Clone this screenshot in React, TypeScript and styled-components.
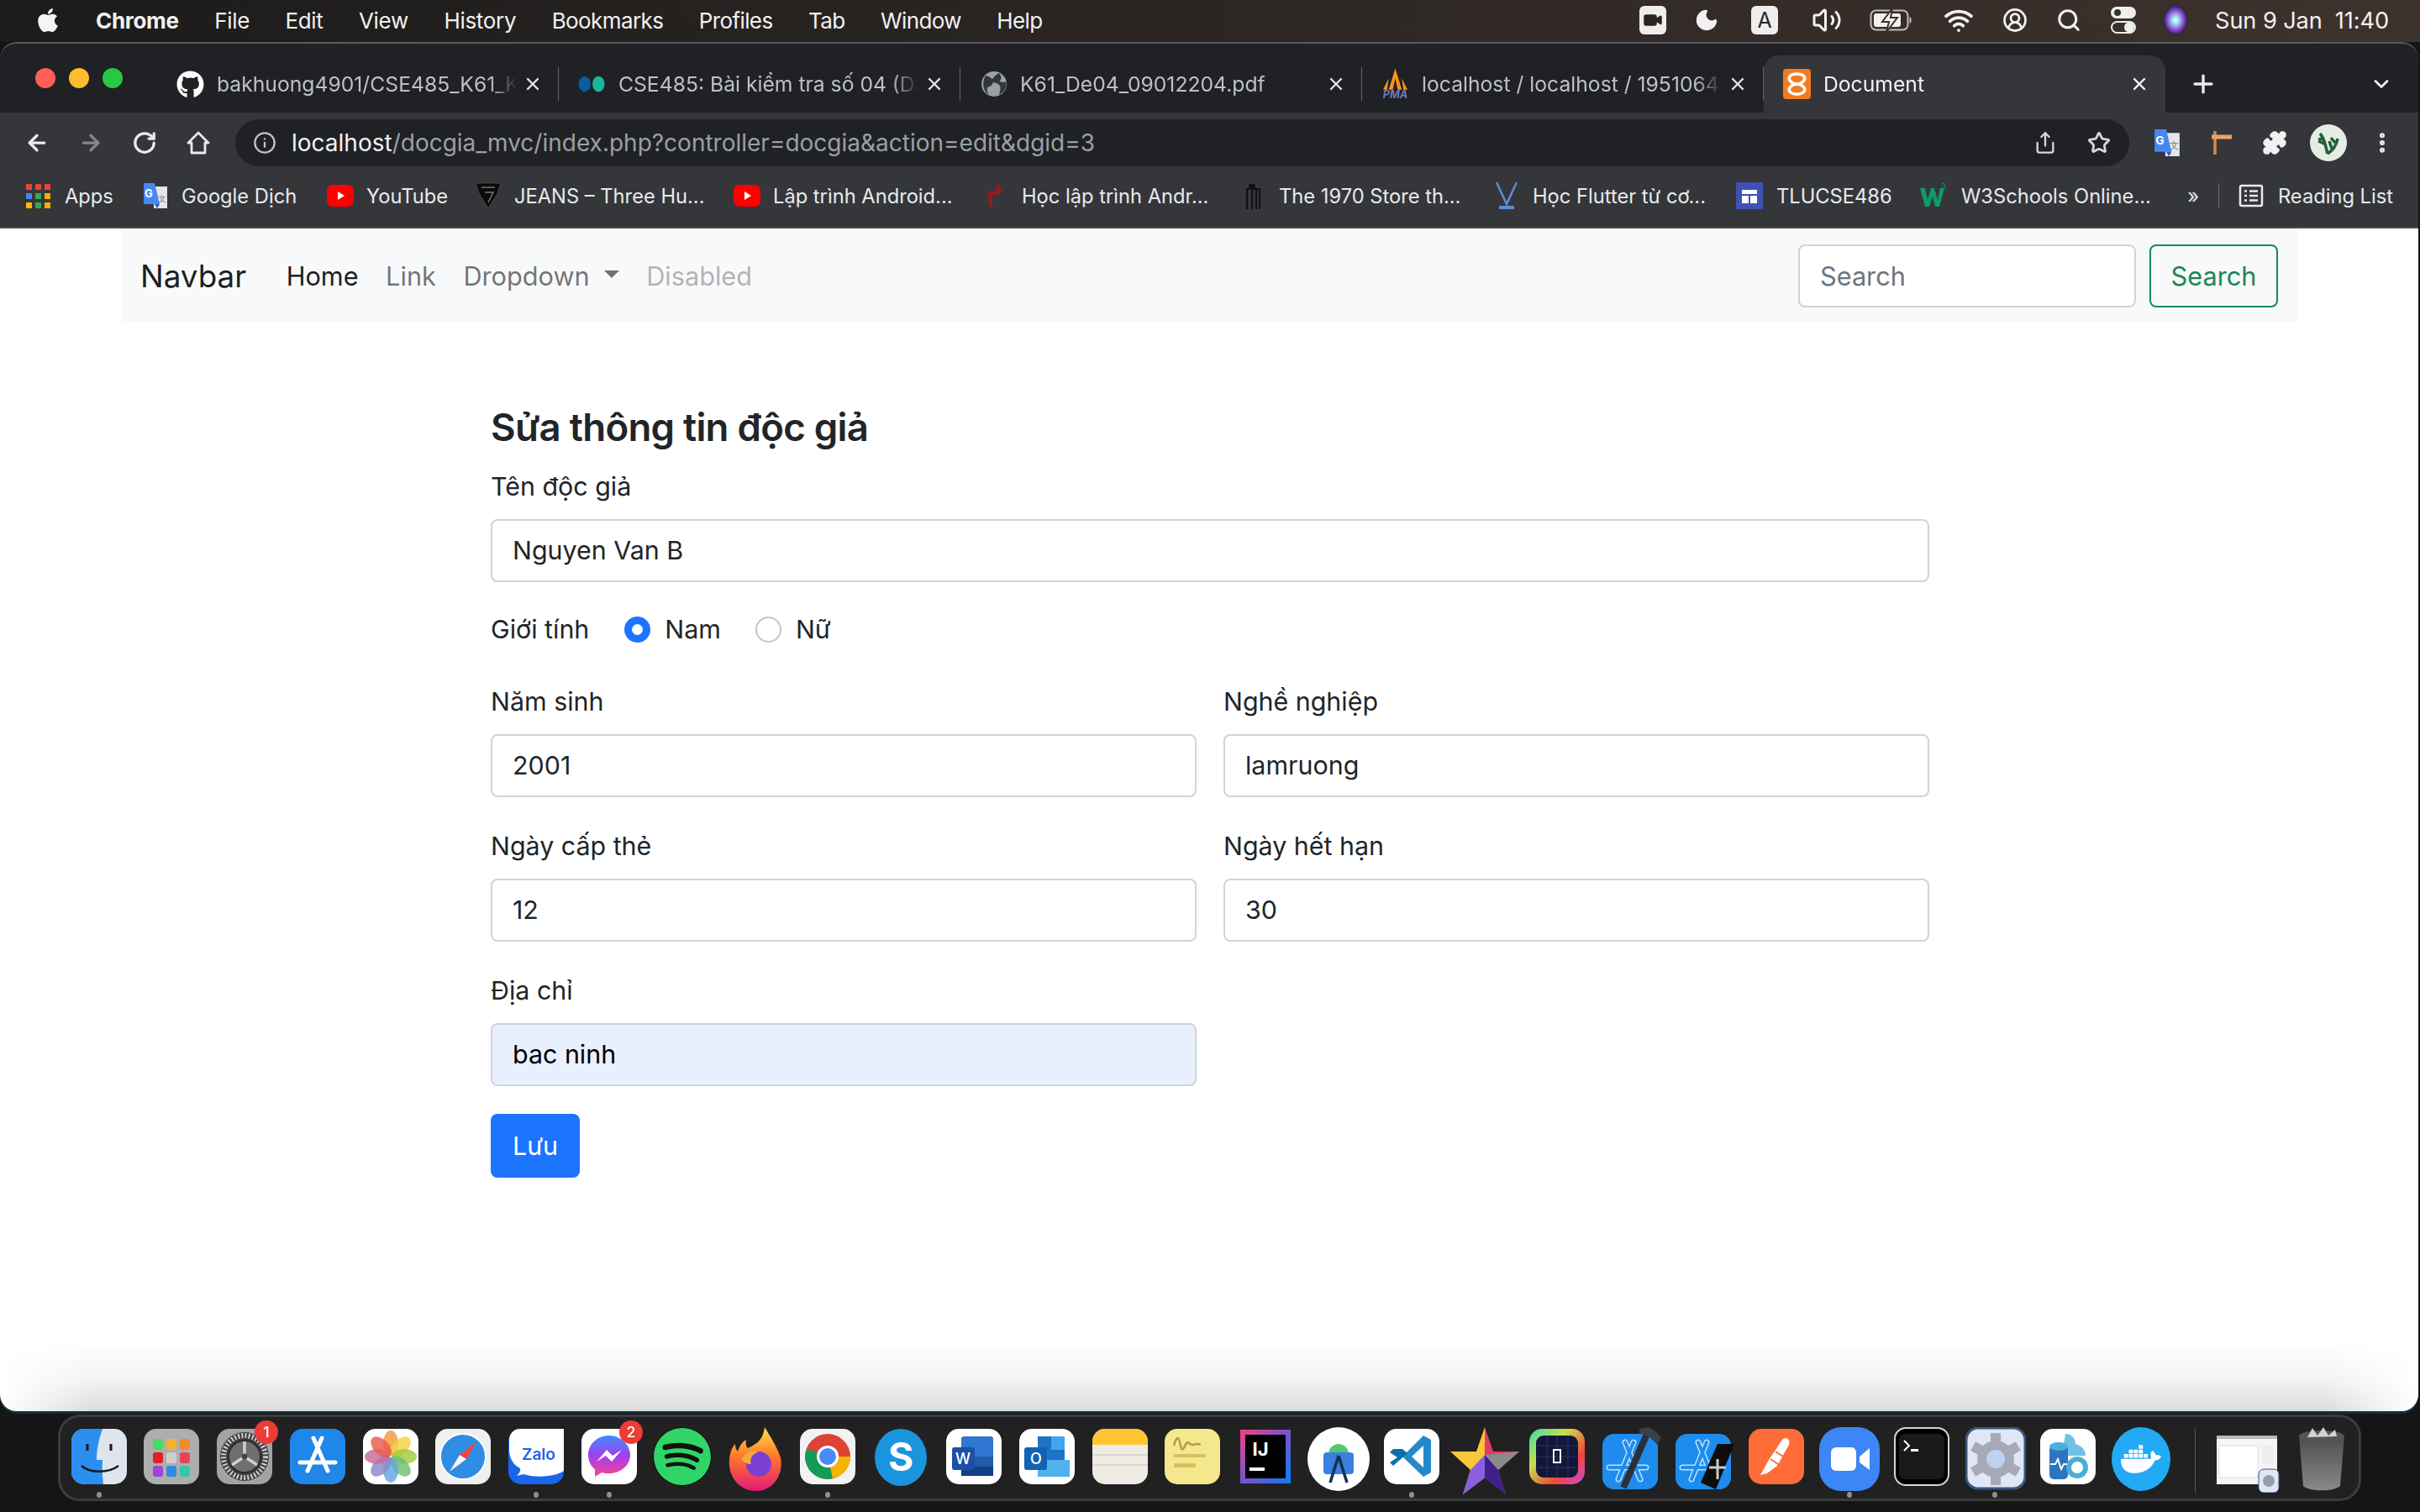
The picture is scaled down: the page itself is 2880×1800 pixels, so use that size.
import React from 'react';
import styled, { createGlobalStyle } from 'styled-components';
import { ArrowLeft, ArrowRight, RotateCw, Info, Share, Star, Puzzle, MoreVertical, Plus, ChevronDown, X, Moon, Search, Wifi, Video, CircleUserRound, Volume2 } from 'lucide-react';
import { FaApple, FaGithub, FaSpotify, FaDocker } from 'react-icons/fa';

const Global = createGlobalStyle`
  html, body { margin: 0; padding: 0; background: #141414; }
  * { box-sizing: border-box; }
`;

const Desktop = styled.div`
  width: 2880px; height: 1800px; overflow: hidden; display: flex; flex-direction: column;
  background: #151515; font-family: Inter, "Noto Sans", sans-serif;
`;

/* ---------- macOS menu bar ---------- */
const MenuBar = styled.div`
  height: 50px; flex: none; display: flex; align-items: center; padding: 0 37px 2px 41px; color: #f1f1f1;
  background: linear-gradient(90deg, #1b1b1b 0%, #2a2522 45%, #3e322d 100%);
  font-size: 26px;
`;
const MenuItems = styled.div`display: flex; align-items: center; gap: 42.4px; margin-left: 41px;`;
const MenuItem = styled.span<{ $bold?: boolean; $tight?: boolean }>`
  font-weight: ${p => (p.$bold ? 700 : 400)}; letter-spacing: ${p => (p.$tight ? -0.6 : -0.3)}px;
`;
const StatusIcons = styled.div`margin-left: auto; display: flex; align-items: center;`;
const StatusSlot = styled.span<{ $w: number }>`width: ${p => p.$w}px; flex: none; display: flex; align-items: center; justify-content: center;`;
const KeyBadge = styled.span`
  width: 32px; height: 34px; border-radius: 6px; background: #eee; color: #2b2522; font-size: 25px;
  display: flex; align-items: center; justify-content: center;
`;
const Clock = styled.span`margin-left: 13px; font-size: 27.2px; white-space: pre; letter-spacing: -0.1px;`;

/* ---------- browser window ---------- */
const Win = styled.div`
  flex: none; height: 1630px; border-radius: 20px; overflow: hidden; display: flex; flex-direction: column;
  background: #202124; border-top: 2px solid #5a5a5c; margin-right: 2px; box-shadow: 0 3px 0 #12303f;
`;
const TabStrip = styled.div`
  height: 82px; flex: none; display: flex; align-items: flex-end; padding-left: 42px; position: relative; color: #bdc1c6;
`;
const Lights = styled.div`display: flex; gap: 16px; width: 145px; align-self: flex-start; margin-top: 29px; flex: none;`;
const Light = styled.span<{ $c: string }>`width: 24px; height: 24px; border-radius: 50%; background: ${p => p.$c};`;
const Tab = styled.div<{ $active?: boolean; $last?: boolean }>`
  width: 478px; height: 68px; flex: none; display: flex; align-items: center; position: relative;
  padding: 0 19px 0 23px; gap: 15px; font-size: 24.7px;
  background: ${p => (p.$active ? '#35363a' : 'transparent')};
  color: ${p => (p.$active ? '#f1f3f4' : '#bdc1c6')};
  border-radius: ${p => (p.$active ? '18px 18px 0 0' : '0')};
  &::after {
    content: ''; position: absolute; right: 0; top: 14px; height: 40px; width: 1px;
    background: ${p => (p.$last ? 'transparent' : '#5f6368')};
  }
`;
const TabIcon = styled.span`width: 33px; height: 38px; flex: none; display: flex; align-items: center; justify-content: center;`;
const TabTitle = styled.span`
  flex: 1; min-width: 0; white-space: nowrap;
  -webkit-mask-image: linear-gradient(90deg, #000 90%, transparent 99%);
  mask-image: linear-gradient(90deg, #000 90%, transparent 99%);
`;
const TabClose = styled.span`margin-left: -12px; width: 24px; flex: none; display: flex;`;
const NewTab = styled.div`margin-left: 28px; display: flex; align-self: center; margin-top: 14px; color: #e8eaed;`;
const TabMenu = styled.div`margin-left: auto; margin-right: 30px; display: flex; align-self: center; margin-top: 14px; color: #e8eaed;`;

const Toolbar = styled.div`
  height: 64px; flex: none; background: #35363a; display: flex; align-items: center; padding: 8px 0 0 29px; color: #e8eaed;
`;
const NavIcons = styled.div`display: flex; align-items: center; gap: 34px; width: 251px; flex: none;`;
const Omni = styled.div`
  flex: none; width: 2254px; height: 56px; background: #202124; border-radius: 28px; display: flex; align-items: center; padding: 0 22px 0 21px; gap: 18px;
  color: #9aa0a6; font-size: 28px;
`;
const Url = styled.span`white-space: nowrap;`;
const Host = styled.span`color: #f1f3f4;`;
const OmniActions = styled.div`margin-left: auto; display: flex; align-items: center; gap: 36px; color: #d5d7da;`;
const Extensions = styled.div`flex: 1; display: flex; align-items: center; padding-left: 13px;`;
const ExtSlot = styled.span`width: 64px; flex: none; display: flex; align-items: center; justify-content: center;`;
const Avatar = styled.span`
  width: 44px; height: 44px; border-radius: 50%; background: #e6ece4; display: flex; align-items: center; justify-content: center;
`;

const Bookmarks = styled.div`
  height: 74px; flex: none; background: #35363a; display: flex; align-items: center; padding: 0 0 2px 30px;
  font-size: 23.7px; color: #e8eaed; border-bottom: 2px solid #4a4b4f;
`;
const Bookmark = styled.div<{ $w: number }>`width: ${p => p.$w}px; flex: none; display: flex; align-items: center; white-space: nowrap;`;
const BookmarkGlyph = styled.span<{ $w: number }>`width: ${p => p.$w}px; flex: none; display: flex; align-items: center;`;
const BookmarkEnd = styled.div`margin-left: auto; display: flex; align-items: center; gap: 17px; padding-right: 30px; white-space: nowrap;`;
const Divider = styled.span`width: 1px; height: 30px; background: #6a6b6f; margin: 0 6px 0 6px;`;

/* ---------- page ---------- */
const Page = styled.div`
  flex: 1; background: #fff; position: relative; color: #212529; font-size: 30.4px; line-height: 47px;
  &::after {
    content: ''; position: absolute; left: 0; right: 0; bottom: 0; height: 80px; pointer-events: none;
    background: linear-gradient(to top, rgba(0,0,0,.14), rgba(0,0,0,.05) 45%, rgba(0,0,0,0));
    -webkit-mask-image: linear-gradient(90deg, transparent, #000 110px, #000 calc(100% - 110px), transparent);
    mask-image: linear-gradient(90deg, transparent, #000 110px, #000 calc(100% - 110px), transparent);
  }
`;
const Navbar = styled.nav`
  height: 112px; margin: 0 144px; background: #f8f9fa; display: flex; align-items: center; padding: 0 23px 0 23px; font-size: 30.7px;
`;
const Brand = styled.span`font-size: 36.8px; color: rgba(0,0,0,.9); margin-right: 47.5px;`;
const NavLinks = styled.div`display: flex; align-items: center; gap: 32.5px;`;
const NavLink = styled.span<{ $tone: number }>`color: rgba(0,0,0,${p => p.$tone}); display: flex; align-items: center; gap: 17px;`;
const Caret = styled.i`width: 0; height: 0; border-left: 9px solid transparent; border-right: 9px solid transparent; border-top: 9px solid currentColor; margin-top: -3px;`;
const SearchForm = styled.div`margin-left: auto; display: flex; gap: 16px;`;
const SearchField = styled.div`
  width: 402px; height: 75px; border: 2px solid #ced4da; border-radius: 8px; padding: 0 24px; display: flex; align-items: center; color: #6c757d; background: #fff;
`;
const SearchButton = styled.div`
  width: 153px; height: 75px; border: 2px solid #198754; border-radius: 8px; color: #198754; display: flex; align-items: center; justify-content: center;
`;
const Content = styled.div`width: 1712px; margin-left: 584px; padding-top: 97px;`;
const Heading = styled.h4`margin: 0 0 19px; font-size: 45.6px; font-weight: 600; line-height: 56px; letter-spacing: -0.75px;`;
const Label = styled.label`display: block; margin-bottom: 15px;`;
const Field = styled.div<{ $autofill?: boolean }>`
  height: 75px; border: 2px solid #ced4da; border-radius: 8px; padding: 0 24px 0 24px; display: flex; align-items: center;
  background: ${p => (p.$autofill ? '#e8f0fe' : '#fff')}; color: ${p => (p.$autofill ? '#000' : '#212529')};
`;
const RadioRow = styled.div`display: flex; align-items: center; margin-top: 33px; height: 47px;`;
const RadioLabel = styled.span`margin-right: 42px;`;
const RadioOption = styled.span`display: flex; align-items: center; gap: 17px; margin-right: 41px;`;
const Radio = styled.i<{ $on?: boolean }>`
  width: 31px; height: 31px; border-radius: 50%; background: #fff;
  border: ${p => (p.$on ? '9px solid #1c74ff' : '2px solid #c6c6c6')};
`;
const Grid = styled.div`display: grid; grid-template-columns: 840px 840px; column-gap: 32px; row-gap: 35px; margin-top: 39px;`;
const Group = styled.div``;
const SaveButton = styled.div`
  margin-top: 33px; width: 106px; height: 76px; border-radius: 8px; background: #1c74ff; color: #fff; display: flex; align-items: center; justify-content: center;
`;

/* ---------- dock ---------- */
const DockRow = styled.div`flex: none; display: flex; justify-content: flex-start; padding: 4px 0 0 69px;`;
const Dock = styled.div`
  width: 2741px; height: 103px; border: 3px solid #3c3c3c; border-radius: 26px; background: #212121; display: flex; align-items: flex-start;
  padding: 12px 0 0 12.5px; gap: 20.8px;
`;
const DockItem = styled.div`width: 66px; height: 84px; flex: none; position: relative;`;
const DockDot = styled.i`position: absolute; left: 30px; bottom: 0; width: 6px; height: 7px; border-radius: 50%; background: #8e8e8e;`;
const DockBadge = styled.b`
  position: absolute; right: -7px; top: -8px; width: 28px; height: 28px; border-radius: 50%; background: #ee3b36; color: #fff;
  font-size: 17px; font-weight: 500; display: flex; align-items: center; justify-content: center;
`;
const DockSeparator = styled.span`width: 1px; height: 76px; background: #5a5a5a; flex: none; margin: 2px 10px 0 10px;`;

const Rounded = ({ fill, children }: { fill: string; children?: React.ReactNode }) => (
  <svg width="66" height="70" viewBox="0 0 66 70" fill="none">
    <rect x="0" y="2" width="66" height="66" rx="15" fill={fill} />
    {children}
  </svg>
);
const T = ({ x, y, s, c, w = 700, children }: { x: number; y: number; s: number; c: string; w?: number; children: string }) => (
  <text x={x} y={y} fontSize={s} fontWeight={w} fill={c} textAnchor="middle" fontFamily="Inter, sans-serif">{children}</text>
);
const OutlineA = ({ dx = 0 }: { dx?: number }) => (
  <g transform={`translate(${dx} 0)`} strokeLinecap="round">
    <path d="M37 18 19 62M27 18l18 44M8 48h44" stroke="#bfe1fb" strokeWidth="7" />
    <path d="M37 18 19 62M27 18l18 44M8 48h44" stroke="#1e8cec" strokeWidth="4" />
  </g>
);

const dockIcons: Record<string, React.ReactNode> = {
  finder: <Rounded fill="#dfe5ee"><path d="M15 2h22c-5 14-7 26-7 37h7c-1 10 0 20 1 29H15A15 15 0 0 1 0 53V17A15 15 0 0 1 15 2Z" fill="#2a8ff0" /><path d="M12 46c10 9 32 9 44 0" stroke="#1b1b1b" strokeWidth="2.5" fill="none" /><path d="M19 20v8M47 20v8" stroke="#1b1b1b" strokeWidth="3" /></Rounded>,
  launchpad: <Rounded fill="#aeaeae">{['#4cd964','#f6b22c','#f38b2a','#e02020','#cfcfcf','#f0405a','#9a48d0','#2d8ae8','#32c8a8'].map((c, i) => <rect key={i} x={11 + (i % 3) * 16} y={14 + Math.floor(i / 3) * 16} width="12" height="13" rx="3" fill={c} />)}</Rounded>,
  prefs: <Rounded fill="#a3a3a3"><circle cx="33" cy="35" r="29" fill="#3f3f3f" /><circle cx="33" cy="35" r="25" fill="none" stroke="#cfcfcf" strokeWidth="6" strokeDasharray="2 2.2" /><circle cx="33" cy="35" r="19" fill="#6f6f6f" stroke="#2c2c2c" strokeWidth="2" /><path d="M33 35V17M33 35 18 45M33 35l15 10" stroke="#d0d0d0" strokeWidth="3.5" /><circle cx="33" cy="35" r="3.5" fill="#444" /></Rounded>,
  appstore: <Rounded fill="#1f87ea"><path d="M38 13 21 52M28 13l17 39M12 42h42" stroke="#fff" strokeWidth="5" strokeLinecap="round" /></Rounded>,
  photos: <Rounded fill="#fff">{['#f29a3b','#f4d23e','#a5c93e','#6fbf73','#62a8dc','#8f86c8','#c46a9a','#ec5a4c'].map((c, i) => <ellipse key={i} cx="33" cy="19" rx="9" ry="15" fill={c} opacity=".82" transform={`rotate(${i * 45} 33 35)`} />)}</Rounded>,
  safari: <Rounded fill="#efefef"><circle cx="33" cy="35" r="27" fill="#2f8de4" stroke="#fff" strokeWidth="2" /><path d="m49 17-12 21-8-5Z" fill="#f0453a" /><path d="m17 53 12-20 8 5Z" fill="#f5f5f5" /></Rounded>,
  zalo: <Rounded fill="#1a66e8"><path d="M14 2h52v50c-12 8-36 8-48 4l-8 2c3-3 5-6 4-9-8-4-13-12-13-22V16C1 8 6 2 14 2Z" fill="#fff" /><T x={36} y={39} s={19} c="#1a66e8" w={600}>Zalo</T></Rounded>,
  messenger: <Rounded fill="#fff"><path d="M33 10C19 10 8 20 8 33c0 7 3 13 8 17v9l8-5c3 1 6 1 9 1 14 0 25-10 25-22S47 10 33 10Z" fill="url(#msgr)" /><path d="m18 41 12-14 7 7 11-7-12 14-7-7Z" fill="#fff" /><defs><linearGradient id="msgr" x1="0" y1="0" x2="0" y2="1"><stop stopColor="#3c8cff" /><stop offset=".5" stopColor="#a63dee" /><stop offset="1" stopColor="#f6458e" /></linearGradient></defs></Rounded>,
  firefox: <svg width="70" height="76" viewBox="0 0 70 76"><path d="M44 0c6 10 14 22 19 36 4 22-10 40-29 40C15 76 0 60 2 38c1-8 3-14 7-18 0 4 1 7 3 9 2-7 6-12 10-14-1 5 0 8 2 10 8-4 18-8 20-25Z" fill="url(#ff)" /><circle cx="37" cy="44" r="15" fill="#7d3fd1" /><path d="M16 38c6-8 15-12 20-8-8 2-10 10-8 14-5 0-9-2-12-6Z" fill="#f9a83a" /><defs><linearGradient id="ff" x1="0" y1="0" x2="0" y2="1"><stop stopColor="#ffe24a" /><stop offset=".45" stopColor="#ff7a2a" /><stop offset="1" stopColor="#e5197a" /></linearGradient></defs></svg>,
  chrome: <Rounded fill="#f2f2f2"><circle cx="33" cy="35" r="27" fill="#db4437" /><path d="M33 35 10 49a27 27 0 0 0 29 12Z" fill="#0f9d58" /><path d="M33 35h27a27 27 0 0 1-21 26Z" fill="#f4b400" /><path d="M33 35 10 49A27 27 0 0 1 8 26Z" fill="#0f9d58" /><circle cx="33" cy="35" r="13" fill="#fff" /><circle cx="33" cy="35" r="10" fill="#4a8af4" /></Rounded>,
  skype: <svg width="66" height="72" viewBox="0 0 66 72"><ellipse cx="33" cy="36" rx="31" ry="34" fill="#1a94dc" /><T x={33} y={52} s={46} c="#fff">S</T></svg>,
  word: <Rounded fill="#fff"><rect x="18" y="11" width="38" height="47" rx="3" fill="#2f77d0" /><rect x="18" y="35" width="38" height="12" fill="#1f5cab" /><rect x="18" y="47" width="38" height="11" fill="#123f86" /><rect x="7" y="24" width="27" height="27" rx="3" fill="#1d4fa8" /><T x={20} y={44} s={18} c="#fff" w={500}>W</T></Rounded>,
  outlook: <Rounded fill="#fff"><rect x="22" y="11" width="32" height="30" fill="#1f73c8" /><rect x="38" y="11" width="16" height="16" fill="#42a5ee" /><path d="M22 39h38v20H22Z" fill="#50b3ee" /><rect x="6" y="24" width="27" height="27" rx="3" fill="#0f62b4" /><T x={20} y={44} s={18} c="#fff" w={500}>O</T></Rounded>,
  notes: <Rounded fill="#efece4"><path d="M0 21V17A15 15 0 0 1 15 2h36a15 15 0 0 1 15 15v4Z" fill="#fdc632" /><path d="M0 33h66M0 45h66" stroke="#d9d6cd" strokeWidth="2" /></Rounded>,
  stickies: <Rounded fill="#f5e78d"><path d="M11 22c4-14 6-10 8 0s5 0 7-3 5 3 8 2 5-2 9 0" stroke="#b59a4a" strokeWidth="2.5" fill="none" /><rect x="11" y="32" width="38" height="4" fill="#d8c062" /><rect x="11" y="43" width="26" height="5" fill="#d8c062" /></Rounded>,
  idea: <svg width="66" height="70" viewBox="0 0 66 70"><rect x="3" y="3" width="60" height="64" fill="url(#ij)" /><rect x="9" y="9" width="48" height="52" fill="#000" /><T x={27} y={34} s={22} c="#fff">IJ</T><rect x="14" y="48" width="18" height="4" fill="#fff" /><defs><linearGradient id="ij" x1="0" y1="0" x2="1" y2="1"><stop stopColor="#f0447d" /><stop offset=".5" stopColor="#7a53c9" /><stop offset="1" stopColor="#087cfa" /></linearGradient></defs></svg>,
  studio: <svg width="74" height="76" viewBox="0 0 74 76" style={{ marginLeft: -4 }}><ellipse cx="37" cy="38" rx="37" ry="38" fill="#fff" /><path d="M25 32a12 12 0 0 1 24 0Z" fill="#54c774" /><rect x="19" y="30" width="36" height="26" rx="4" fill="#3d7fe0" /><path d="M37 34 27 66M37 34l10 32" stroke="#12324e" strokeWidth="3.5" /></svg>,
  vscode: <Rounded fill="#fff"><path d="M47 10 22 35l25 24 9-5V15Z" fill="#2489ca" /><path d="m47 22-14 13 14 13Z" fill="#fff" /><path d="M11 26l-4 4 9 6-9 6 4 4 17-15-6-5Z" fill="#0d6fb0" /></Rounded>,
  star: <svg width="82" height="80" viewBox="0 0 82 80" style={{ marginLeft: -8 }}><path d="M41 0 31 29H0l24 22-9 29 26-20Z" fill="#f9c63d" /><path d="M41 0l10 29h31L57 51l9 29-25-20Z" fill="#e23a67" /><path d="M41 33 82 29 57 51Z" fill="#8a8a8a" /><path d="M41 33 57 51l9 29-25-20Z" fill="#3f1f8a" /><path d="M41 33v27L15 80l9-29Z" fill="#8a5fe0" /></svg>,
  instr: <Rounded fill="url(#inst)"><rect x="8" y="10" width="50" height="50" rx="9" fill="#12173a" /><path d="M8 22h50M8 35h50M8 48h50M21 10v50M33 10v50M46 10v50" stroke="#2b3361" strokeWidth="1" /><rect x="29" y="27" width="8" height="15" fill="none" stroke="#fff" strokeWidth="2" /><defs><linearGradient id="inst" x1="0" y1="0" x2="1" y2="1"><stop stopColor="#3bd8b0" /><stop offset=".35" stopColor="#c9e04a" /><stop offset=".7" stopColor="#f0453a" /><stop offset="1" stopColor="#c64ae0" /></linearGradient></defs></Rounded>,
  xcode: <svg width="84" height="76" viewBox="0 0 84 76"><rect x="0" y="8" width="66" height="66" rx="14" fill="#1e8cec" /><OutlineA /><path d="M54 6 25 72" stroke="#2d2f36" strokeWidth="8" /><path d="M44 3c8-6 18-2 26 10l-5 8c-6-8-12-12-21-14Z" fill="#3c3f48" /></svg>,
  simulator: <svg width="84" height="76" viewBox="0 0 84 76"><rect x="0" y="8" width="66" height="66" rx="14" fill="#1e8cec" /><OutlineA /><path d="M50 20h20L48 74l-18-8Z" fill="#0d0d0d" /><path d="M40 48h20M50 38v24" stroke="#ccc" strokeWidth="3" /></svg>,
  postman: <Rounded fill="#ff6c37"><path d="m14 57 10-18 16-24c5-5 10 0 8 6L34 46l-12 9Z" fill="#fff" /><path d="M26 38l12 8M32 29l12 8" stroke="#ff6c37" strokeWidth="2" /></Rounded>,
  zoom: <svg width="72" height="76" viewBox="0 0 72 76" style={{ marginLeft: -3 }}><rect x="0" y="0" width="72" height="76" rx="26" fill="#3c86f5" /><rect x="14" y="24" width="30" height="28" rx="6" fill="#fff" /><path d="M48 35 60 25v26L48 42Z" fill="#fff" /></svg>,
  terminal: <svg width="66" height="70" viewBox="0 0 66 70"><rect x="1" y="1" width="64" height="68" rx="13" fill="#000" stroke="#ccd9dd" strokeWidth="2" /><rect x="6" y="8" width="54" height="54" rx="7" fill="#1a1a1a" /><path d="m12 16 6 6-6 6" stroke="#fff" strokeWidth="2" fill="none" /><rect x="20" y="26" width="9" height="3" fill="#fff" /></svg>,
  gear: <svg width="72" height="76" viewBox="0 0 72 76" style={{ marginLeft: -2 }}><rect x="1" y="1" width="70" height="72" rx="14" fill="#dfe6f5" stroke="#39587f" strokeWidth="3" /><circle cx="36" cy="38" r="22" fill="#a7a9b6" /><circle cx="36" cy="38" r="11" fill="#bcd2f0" />{[0,60,120,180,240,300].map(a => <rect key={a} x="30" y="7" width="12" height="12" fill="#a7a9b6" transform={`rotate(${a} 36 38)`} />)}</svg>,
  azure: <Rounded fill="#fff"><path d="M30 8c8 0 12 6 12 12 8 2 12 8 12 14H26Z" fill="#6fc1e8" /><rect x="11" y="22" width="22" height="40" rx="5" fill="#2f74c0" /><ellipse cx="22" cy="23" rx="11" ry="5" fill="#48b0de" /><circle cx="44" cy="48" r="10" fill="none" stroke="#4aaed8" strokeWidth="6" /><path d="m12 44 6 0 3-6 4 12 3-6h4" stroke="#fff" strokeWidth="2" fill="none" /></Rounded>,
  preview: <svg width="84" height="78" viewBox="0 0 84 78" style={{ marginLeft: -9 }}><rect x="4" y="10" width="72" height="58" fill="#f5f5f5" /><rect x="4" y="10" width="72" height="4" fill="#b9b9b9" /><rect x="7" y="22" width="46" height="38" fill="#fff" stroke="#ddd" /><rect x="58" y="22" width="14" height="22" fill="#ededed" /><rect x="54" y="50" width="24" height="28" rx="6" fill="#dfe6f5" stroke="#39587f" /><circle cx="66" cy="64" r="7" fill="#9a9caa" /></svg>,
  trash: <svg width="66" height="76" viewBox="0 0 66 76"><path d="M6 10h54l-5 60c-7 7-37 7-44 0Z" fill="url(#tr)" /><ellipse cx="33" cy="11" rx="27" ry="7" fill="#555" /><path d="m16 12 6-11 6 9 7-10 6 10 8-7 2 8" fill="#d2d2d2" /><defs><linearGradient id="tr" x1="0" y1="0" x2="0" y2="1"><stop stopColor="#4c4c4c" /><stop offset="1" stopColor="#8a8a8a" /></linearGradient></defs></svg>,
};

const dock: { key: string; dot?: boolean; badge?: string; sep?: boolean; icon?: React.ReactNode }[] = [
  { key: 'finder', dot: true }, { key: 'launchpad' }, { key: 'prefs', badge: '1' }, { key: 'appstore' }, { key: 'photos' }, { key: 'safari' },
  { key: 'zalo', dot: true }, { key: 'messenger', dot: true, badge: '2' },
  { key: 'spotify', icon: <FaSpotify size={70} color="#2fd667" style={{ marginLeft: -2, background: '#111', borderRadius: '50%' }} /> },
  { key: 'firefox' }, { key: 'chrome', dot: true }, { key: 'skype' }, { key: 'word' }, { key: 'outlook' }, { key: 'notes' }, { key: 'stickies' }, { key: 'idea' }, { key: 'studio' },
  { key: 'vscode', dot: true }, { key: 'star' }, { key: 'instr' }, { key: 'xcode' }, { key: 'simulator' }, { key: 'postman' }, { key: 'zoom', dot: true }, { key: 'terminal' }, { key: 'gear', dot: true }, { key: 'azure' },
  { key: 'docker', icon: <svg width="70" height="76" viewBox="0 0 70 76" style={{ marginLeft: -2 }}><ellipse cx="35" cy="38" rx="35" ry="38" fill="#22aaf5" /><foreignObject x="11" y="14" width="48" height="48"><FaDocker size={48} color="#fff" /></foreignObject></svg> },
  { key: 'sep', sep: true }, { key: 'preview' }, { key: 'trash' },
];

/* ---------- favicons ---------- */
const GTranslate = ({ s = 32 }: { s?: number }) => (
  <svg width={s} height={s} viewBox="0 0 32 32"><path d="M14 5h16v26H14Z" fill="#e4e6e8" /><path d="M2 1h13l6 25H2Z" fill="#4688f1" /><path d="M15 26h6l-3 5Z" fill="#2a56c6" /><text x="8" y="18" fontSize="13" fontWeight="700" fill="#fff" textAnchor="middle" fontFamily="Inter, sans-serif">G</text><text x="24" y="23" fontSize="10" fill="#777" textAnchor="middle" fontFamily="Inter, sans-serif">文</text></svg>
);
const AppsGrid = () => (
  <svg width="31" height="30" viewBox="0 0 31 30">{['#ea4335','#ea4335','#ea4335','#4285f4','#34a853','#f9ab00','#fbbc04','#34a853','#f9ab00'].map((c, i) => <rect key={i} x={1 + (i % 3) * 11} y={1 + Math.floor(i / 3) * 11} width="7" height="7" fill={c} />)}</svg>
);
const Jeans = () => (
  <svg width="32" height="32" viewBox="0 0 32 32"><path d="M1 1h30l-4 12-11 18L5 13Z" fill="#0a0a0a" stroke="#444" /><path d="M8 6h16M12 12h10l-6 12" stroke="#777" strokeWidth="1.5" fill="none" /></svg>
);
const RedMark = () => (
  <svg width="22" height="32" viewBox="0 0 22 32"><path d="M17 0v8l5 2-5 2v3h-9v17L3 26V10h9V5Z" fill="#8e1c1f" /></svg>
);
const Store = () => (
  <svg width="32" height="32" viewBox="0 0 32 32" fill="none"><path d="M8 8h16M9 8v24M15 8v24M20 8v24M24 8v24" stroke="#111" strokeWidth="2" /><path d="M11 2h8v6h-8Z" fill="#111" /></svg>
);
const FlutterV = () => (
  <svg width="26" height="32" viewBox="0 0 26 32" fill="none"><path d="M1 0l12 26L25 0" stroke="#5a8fd0" strokeWidth="2.5" /><rect x="4" y="28" width="18" height="4" fill="#5a8fd0" /></svg>
);
const BoardIcon = () => (
  <svg width="32" height="32" viewBox="0 0 32 32"><rect width="32" height="32" fill="#3f51b5" /><rect x="7" y="9" width="18" height="5" fill="#fff" /><rect x="7" y="16" width="8" height="9" fill="#fff" /><rect x="17" y="16" width="8" height="9" fill="#fff" /></svg>
);
const W3 = () => (
  <svg width="32" height="32" viewBox="0 0 32 32"><path d="M0 7h6l3 14 4-14h4l4 14 3-14h5l-6 22h-5l-3-12-4 12H6Z" fill="#0d9b67" /><text x="28" y="8" fontSize="9" fill="#0d9b67" textAnchor="middle" fontFamily="Inter, sans-serif">3</text></svg>
);
const YT = () => <svg width="32" height="32" viewBox="0 0 32 32"><rect y="3" width="32" height="26" rx="7" fill="#f00" /><path d="m13 11 8 5-8 5Z" fill="#fff" /></svg>;
const Pma = () => (
  <svg width="34" height="38" viewBox="0 0 34 38"><path d="M17 0 9 26h5l3-14 3 14h5ZM9 12 2 26h5ZM25 12l7 14h-5Z" fill="#f7941d" /><text x="17" y="37" fontSize="13" fontWeight="700" fontStyle="italic" fill="#6c78af" textAnchor="middle" fontFamily="Inter, sans-serif">PMA</text></svg>
);
const Xampp = () => (
  <svg width="33" height="36" viewBox="0 0 33 36" fill="none"><rect width="33" height="36" rx="4" fill="#f47a20" /><path d="M8 9c3-4 14-4 17 0s-3 9-8.500 9S5 23 8 27s14 4 17 0-3-9-8.500-9S5 13 8 9Z" stroke="#fff" strokeWidth="3.5" /></svg>
);
const Dots = () => (
  <svg width="34" height="20" viewBox="0 0 34 20"><ellipse cx="8" cy="10" rx="7.5" ry="9.5" fill="#0a5b9f" /><ellipse cx="25" cy="10" rx="7.500" ry="9.5" fill="#18b89c" /></svg>
);
const GlobeIcon = () => (
  <svg width="32" height="32" viewBox="0 0 32 32"><circle cx="16" cy="16" r="15" fill="#9aa0a6" /><path d="M6 6c8 2 10 6 8 10s-5 2-6 5 1 6 2 8C3 25 1 14 6 6ZM22 3c4 5 2 8 1 9s4 3 7 1c2 6-2 13-8 16 1-5 3-9 0-12s-5-2-8-3 1-7 8-11Z" fill="#35363a" /></svg>
);
const HomeOutline = () => (
  <svg width="30" height="30" viewBox="0 0 30 30" fill="none" stroke="currentColor" strokeWidth="2.8" strokeLinejoin="round"><path d="M15 3 3 15h4v12h16V15h4Z" /></svg>
);
const ReadingIcon = () => (
  <svg width="30" height="30" viewBox="0 0 30 30" fill="none" stroke="currentColor" strokeWidth="2.5"><rect x="2" y="3" width="26" height="24" rx="2" /><path d="M7 9.500h3M13 9.500h10M7 15h3M13 15h10M7 20.500h3M13 20.500h10" /></svg>
);
const Battery = () => (
  <svg width="52" height="30" viewBox="0 0 52 30" fill="none"><rect x="1.500" y="3.500" width="44" height="23" rx="6" stroke="#bdbdbd" strokeWidth="2" /><rect x="5" y="7" width="32" height="16" rx="3" fill="#f1f1f1" /><path d="M47.500 11v8c3-1 3-7 0-8Z" fill="#bdbdbd" /><path d="M27 1 15 17h8l-3 12 13-17h-8Z" fill="#f1f1f1" stroke="#38302b" strokeWidth="2" /></svg>
);
const ControlCentre = () => (
  <svg width="34" height="36" viewBox="0 0 34 36"><rect x="2" y="2" width="30" height="14" rx="7" fill="#eee" /><circle cx="10" cy="9" r="4" fill="#3a302b" /><rect x="3" y="20" width="28" height="13" rx="6.5" fill="none" stroke="#eee" strokeWidth="2" /><circle cx="24" cy="26.5" r="6" fill="#eee" /></svg>
);
const Siri = () => (
  <svg width="28" height="36" viewBox="0 0 28 36"><defs><radialGradient id="siri"><stop stopColor="#fff" /><stop offset=".35" stopColor="#7ed4e8" /><stop offset=".7" stopColor="#a03fd0" /><stop offset="1" stopColor="#1b2a60" /></radialGradient></defs><ellipse cx="14" cy="18" rx="14" ry="17" fill="url(#siri)" /></svg>
);
const Sprout = () => (
  <svg width="36" height="36" viewBox="0 0 36 36" fill="none"><path d="M8 7c4 4 6 11 9 24M17 31c4-3 10-7 12-18M15 20l-9-4M22 25l-3-9M12 13l-6 1M26 18l-5-6" stroke="#22603a" strokeWidth="3.5" /></svg>
);
const Orange = () => (
  <svg width="30" height="32" viewBox="0 0 30 32"><path d="M8 2v28" stroke="#d98a45" strokeWidth="3.5" /><path d="M4 9h24" stroke="#e9a368" strokeWidth="5" /></svg>
);

const statusIcons: { w: number; node: React.ReactNode }[] = [
  { w: 64, node: <KeyBadge><Video size={24} fill="#2b2522" strokeWidth={1.5} /></KeyBadge> },
  { w: 64, node: <Moon size={30} fill="#f1f1f1" strokeWidth={1.5} /> },
  { w: 74, node: <KeyBadge>A</KeyBadge> },
  { w: 74, node: <Volume2 size={36} strokeWidth={2} /> },
  { w: 80, node: <Battery /> },
  { w: 80, node: <Wifi size={36} strokeWidth={2.5} /> },
  { w: 54, node: <CircleUserRound size={30} strokeWidth={2.2} /> },
  { w: 74, node: <Search size={30} strokeWidth={2.4} /> },
  { w: 56, node: <ControlCentre /> },
  { w: 68, node: <Siri /> },
];

const tabs: { icon: React.ReactNode; title: string }[] = [
  { icon: <FaGithub size={33} color="#fff" />, title: 'bakhuong4901/CSE485_K61_K' },
  { icon: <Dots />, title: 'CSE485: Bài kiểm tra số 04 (Dà' },
  { icon: <GlobeIcon />, title: 'K61_De04_09012204.pdf' },
  { icon: <Pma />, title: 'localhost / localhost / 1951064' },
];
const menus = ['File', 'Edit', 'View', 'History', 'Bookmarks', 'Profiles', 'Tab', 'Window', 'Help'];
const marks: { icon: React.ReactNode; label: string; w: number; g?: number }[] = [
  { icon: <AppsGrid />, label: 'Apps', w: 139 },
  { icon: <GTranslate />, label: 'Google Dịch', w: 220 },
  { icon: <YT />, label: 'YouTube', w: 176 },
  { icon: <Jeans />, label: 'JEANS – Three Hu...', w: 308 },
  { icon: <YT />, label: 'Lập trình Android...', w: 300 },
  { icon: <RedMark />, label: 'Học lập trình Andr...', w: 302, g: 43 },
  { icon: <Store />, label: 'The 1970 Store th...', w: 305 },
  { icon: <FlutterV />, label: 'Học Flutter từ cơ...', w: 286, g: 44 },
  { icon: <BoardIcon />, label: 'TLUCSE486', w: 219, g: 48 },
  { icon: <W3 />, label: 'W3Schools Online...', w: 280, g: 49 },
];

const Field2 = ({ label, value, autofill }: { label: string; value: string; autofill?: boolean }) => (
  <Group>
    <Label>{label}</Label>
    <Field $autofill={autofill}>{value}</Field>
  </Group>
);

export default function App() {
  return (
    <Desktop>
      <Global />
      <MenuBar>
        <FaApple size={32} color="#f4f4f4" />
        <MenuItems>
          <MenuItem $bold>Chrome</MenuItem>
          {menus.map((m, i) => <MenuItem key={m} $tight={i >= 4}>{m}</MenuItem>)}
        </MenuItems>
        <StatusIcons>
          {statusIcons.map((s, i) => <StatusSlot key={i} $w={s.w}>{s.node}</StatusSlot>)}
          <Clock>Sun 9 Jan  11:40</Clock>
        </StatusIcons>
      </MenuBar>

      <Win>
        <TabStrip>
          <Lights>
            <Light $c="#ff5f57" /><Light $c="#febc2e" /><Light $c="#28c840" />
          </Lights>
          {tabs.map(t => (
            <Tab key={t.title}>
              <TabIcon>{t.icon}</TabIcon>
              <TabTitle>{t.title}</TabTitle>
              <TabClose><X size={24} color="#dfe1e5" strokeWidth={2.4} /></TabClose>
            </Tab>
          ))}
          <Tab $active $last>
            <TabIcon><Xampp /></TabIcon>
            <TabTitle>Document</TabTitle>
            <TabClose><X size={24} color="#f1f3f4" strokeWidth={2.4} /></TabClose>
          </Tab>
          <NewTab><Plus size={34} strokeWidth={2.4} /></NewTab>
          <TabMenu><ChevronDown size={28} strokeWidth={2.4} /></TabMenu>
        </TabStrip>

        <Toolbar>
          <NavIcons>
            <ArrowLeft size={30} strokeWidth={2.6} />
            <ArrowRight size={30} strokeWidth={2.6} color="#85878a" />
            <RotateCw size={30} strokeWidth={2.6} />
            <HomeOutline />
          </NavIcons>
          <Omni>
            <Info size={28} strokeWidth={2} color="#bdc1c6" />
            <Url><Host>localhost</Host>/docgia_mvc/index.php?controller=docgia&amp;action=edit&amp;dgid=3</Url>
            <OmniActions>
              <Share size={28} strokeWidth={2} />
              <Star size={28} strokeWidth={2.4} />
            </OmniActions>
          </Omni>
          <Extensions>
            <ExtSlot><GTranslate s={34} /></ExtSlot>
            <ExtSlot><Orange /></ExtSlot>
            <ExtSlot><Puzzle size={30} fill="#f1f1f1" color="#f1f1f1" /></ExtSlot>
            <ExtSlot><Avatar><Sprout /></Avatar></ExtSlot>
            <ExtSlot><MoreVertical size={30} strokeWidth={2.8} /></ExtSlot>
          </Extensions>
        </Toolbar>

        <Bookmarks>
          {marks.map(m => (
            <Bookmark key={m.label} $w={m.w}>
              <BookmarkGlyph $w={m.g ?? 47}>{m.icon}</BookmarkGlyph>
              {m.label}
            </Bookmark>
          ))}
          <BookmarkEnd>
            <span>»</span>
            <Divider />
            <ReadingIcon />
            <span>Reading List</span>
          </BookmarkEnd>
        </Bookmarks>

        <Page>
          <Navbar>
            <Brand>Navbar</Brand>
            <NavLinks>
              <NavLink $tone={0.9}>Home</NavLink>
              <NavLink $tone={0.55}>Link</NavLink>
              <NavLink $tone={0.55}>Dropdown<Caret /></NavLink>
              <NavLink $tone={0.3}>Disabled</NavLink>
            </NavLinks>
            <SearchForm>
              <SearchField>Search</SearchField>
              <SearchButton>Search</SearchButton>
            </SearchForm>
          </Navbar>
          <Content>
            <Heading>Sửa thông tin độc giả</Heading>
            <Field2 label="Tên độc giả" value="Nguyen Van B" />
            <RadioRow>
              <RadioLabel>Giới tính</RadioLabel>
              <RadioOption><Radio $on />Nam</RadioOption>
              <RadioOption><Radio />Nữ</RadioOption>
            </RadioRow>
            <Grid>
              <Field2 label="Năm sinh" value="2001" />
              <Field2 label="Nghề nghiệp" value="lamruong" />
              <Field2 label="Ngày cấp thẻ" value="12" />
              <Field2 label="Ngày hết hạn" value="30" />
              <Field2 label="Địa chỉ" value="bac ninh" autofill />
            </Grid>
            <SaveButton>Lưu</SaveButton>
          </Content>
        </Page>
      </Win>

      <DockRow>
        <Dock>
          {dock.map(d => d.sep ? <DockSeparator key={d.key} /> : (
            <DockItem key={d.key}>
              {d.icon ?? dockIcons[d.key]}
              {d.badge && <DockBadge>{d.badge}</DockBadge>}
              {d.dot && <DockDot />}
            </DockItem>
          ))}
        </Dock>
      </DockRow>
    </Desktop>
  );
}
